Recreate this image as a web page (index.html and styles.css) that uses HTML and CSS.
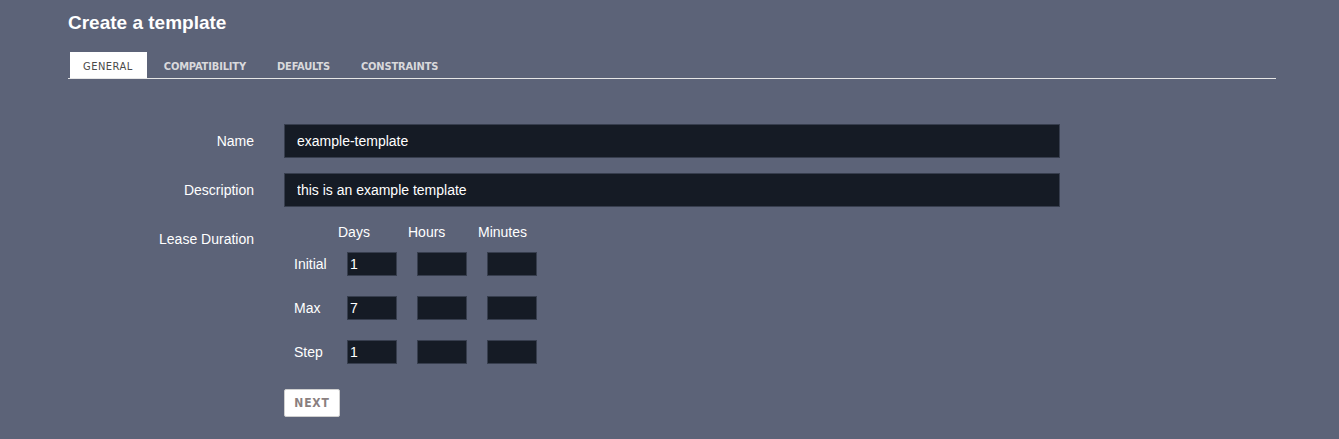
FILE: index.html
```html
<!DOCTYPE html>
<html>
<head>
<meta charset="utf-8">
<link rel="stylesheet" href="styles.css">
</head>
<body>
<div class="page">
  <h1 class="title">Create a template</h1>
  <div class="tabs">
    <div class="tab active">GENERAL</div>
    <div class="tab">COMPATIBILITY</div>
    <div class="tab">DEFAULTS</div>
    <div class="tab">CONSTRAINTS</div>
  </div>
  <form class="form">
    <div class="row">
      <label class="label">Name</label>
      <div class="field"><input class="text" type="text" value="example-template"></div>
    </div>
    <div class="row">
      <label class="label">Description</label>
      <div class="field"><input class="text" type="text" value="this is an example template"></div>
    </div>
    <div class="row lease">
      <label class="label lease-label">Lease Duration</label>
      <div class="field">
        <div class="dur">
          <div class="dur-head">
            <span>Days</span><span>Hours</span><span>Minutes</span>
          </div>
          <div class="dur-row">
            <span class="dur-label">Initial</span>
            <input class="small" type="text" value="1"><input class="small" type="text"><input class="small" type="text">
          </div>
          <div class="dur-row">
            <span class="dur-label">Max</span>
            <input class="small" type="text" value="7"><input class="small" type="text"><input class="small" type="text">
          </div>
          <div class="dur-row">
            <span class="dur-label">Step</span>
            <input class="small" type="text" value="1"><input class="small" type="text"><input class="small" type="text">
          </div>
        </div>
        <button class="next" type="button">NEXT</button>
      </div>
    </div>
  </form>
</div>
</body>
</html>
```

FILE: styles.css
```css
html, body {
  margin: 0;
  padding: 0;
  background: #5c6378;
  font-family: "Liberation Sans", Arial, Helvetica, sans-serif;
  color: #ffffff;
}
.page {
  padding: 0 63px 0 68px;
  height: 439px;
  box-sizing: border-box;
}
.title {
  margin: 0;
  padding-top: 12px;
  font-size: 19px;
  line-height: 22px;
  font-weight: bold;
  color: #ffffff;
}
.tabs {
  display: flex;
  margin-top: 18px;
  padding-left: 2px;
  border-bottom: 1px solid #e6e6e6;
  height: 26px;
}
.tab {
  font-family: "DejaVu Sans Condensed", "Liberation Sans", sans-serif;
  font-stretch: condensed;
  font-size: 11px;
  font-weight: bold;
  letter-spacing: -0.15px;
  line-height: 23px;
  padding: 3px 14px 0 13px;
  margin-right: 4px;
  color: #d9d9dc;
}
.tab.active {
  background: #ffffff;
  color: #4a4a4a;
  font-weight: normal;
  letter-spacing: 0.5px;
}
.form {
  margin-top: 45px;
  display: flex;
  flex-direction: column;
  gap: 15px;
}
.row {
  display: flex;
  gap: 30px;
  align-items: center;
}
.label {
  width: 186px;
  text-align: right;
  font-size: 14px;
  color: #ffffff;
}
.field {
  flex: 0 0 auto;
}
.text {
  width: 776px;
  height: 34px;
  box-sizing: border-box;
  background: #151b25;
  border: 1px solid #373e4e;
  color: #ffffff;
  font-family: "Liberation Sans", Arial, sans-serif;
  font-size: 14px;
  padding: 0 12px;
  outline: none;
  display: block;
}
.lease {
  align-items: flex-start;
}
.lease-label {
  padding-top: 9px;
}
.dur {
  display: flex;
  flex-direction: column;
}
.dur-head {
  display: flex;
  padding-left: 54px;
  font-size: 14px;
  line-height: 17px;
  margin-top: 2px;
}
.dur-head span {
  width: 70px;
}
.dur-row {
  display: flex;
  align-items: center;
  gap: 20px;
  margin-top: 11px;
  height: 24px;
}
.dur-row + .dur-row {
  margin-top: 20px;
}
.dur-label {
  width: 33px;
  padding-left: 10px;
  margin-right: -20px;
  box-sizing: content-box;
  font-size: 14px;
}
.dur-label + .small {
  margin-left: 20px;
}
.small {
  width: 50px;
  height: 24px;
  box-sizing: border-box;
  background: #151b25;
  border: 1px solid #373e4e;
  color: #ffffff;
  font-family: "Liberation Sans", Arial, sans-serif;
  font-size: 14px;
  padding: 0 2px;
  outline: none;
}
.next {
  margin-top: 25px;
  width: 56px;
  height: 28px;
  background: #ffffff;
  border: 1px solid #cfcfcf;
  border-radius: 2px;
  font-family: "DejaVu Sans Condensed", "Liberation Sans", sans-serif;
  font-stretch: condensed;
  font-size: 12px;
  font-weight: bold;
  letter-spacing: 0.8px;
  color: #8a7f7f;
  padding: 0;
}
```
